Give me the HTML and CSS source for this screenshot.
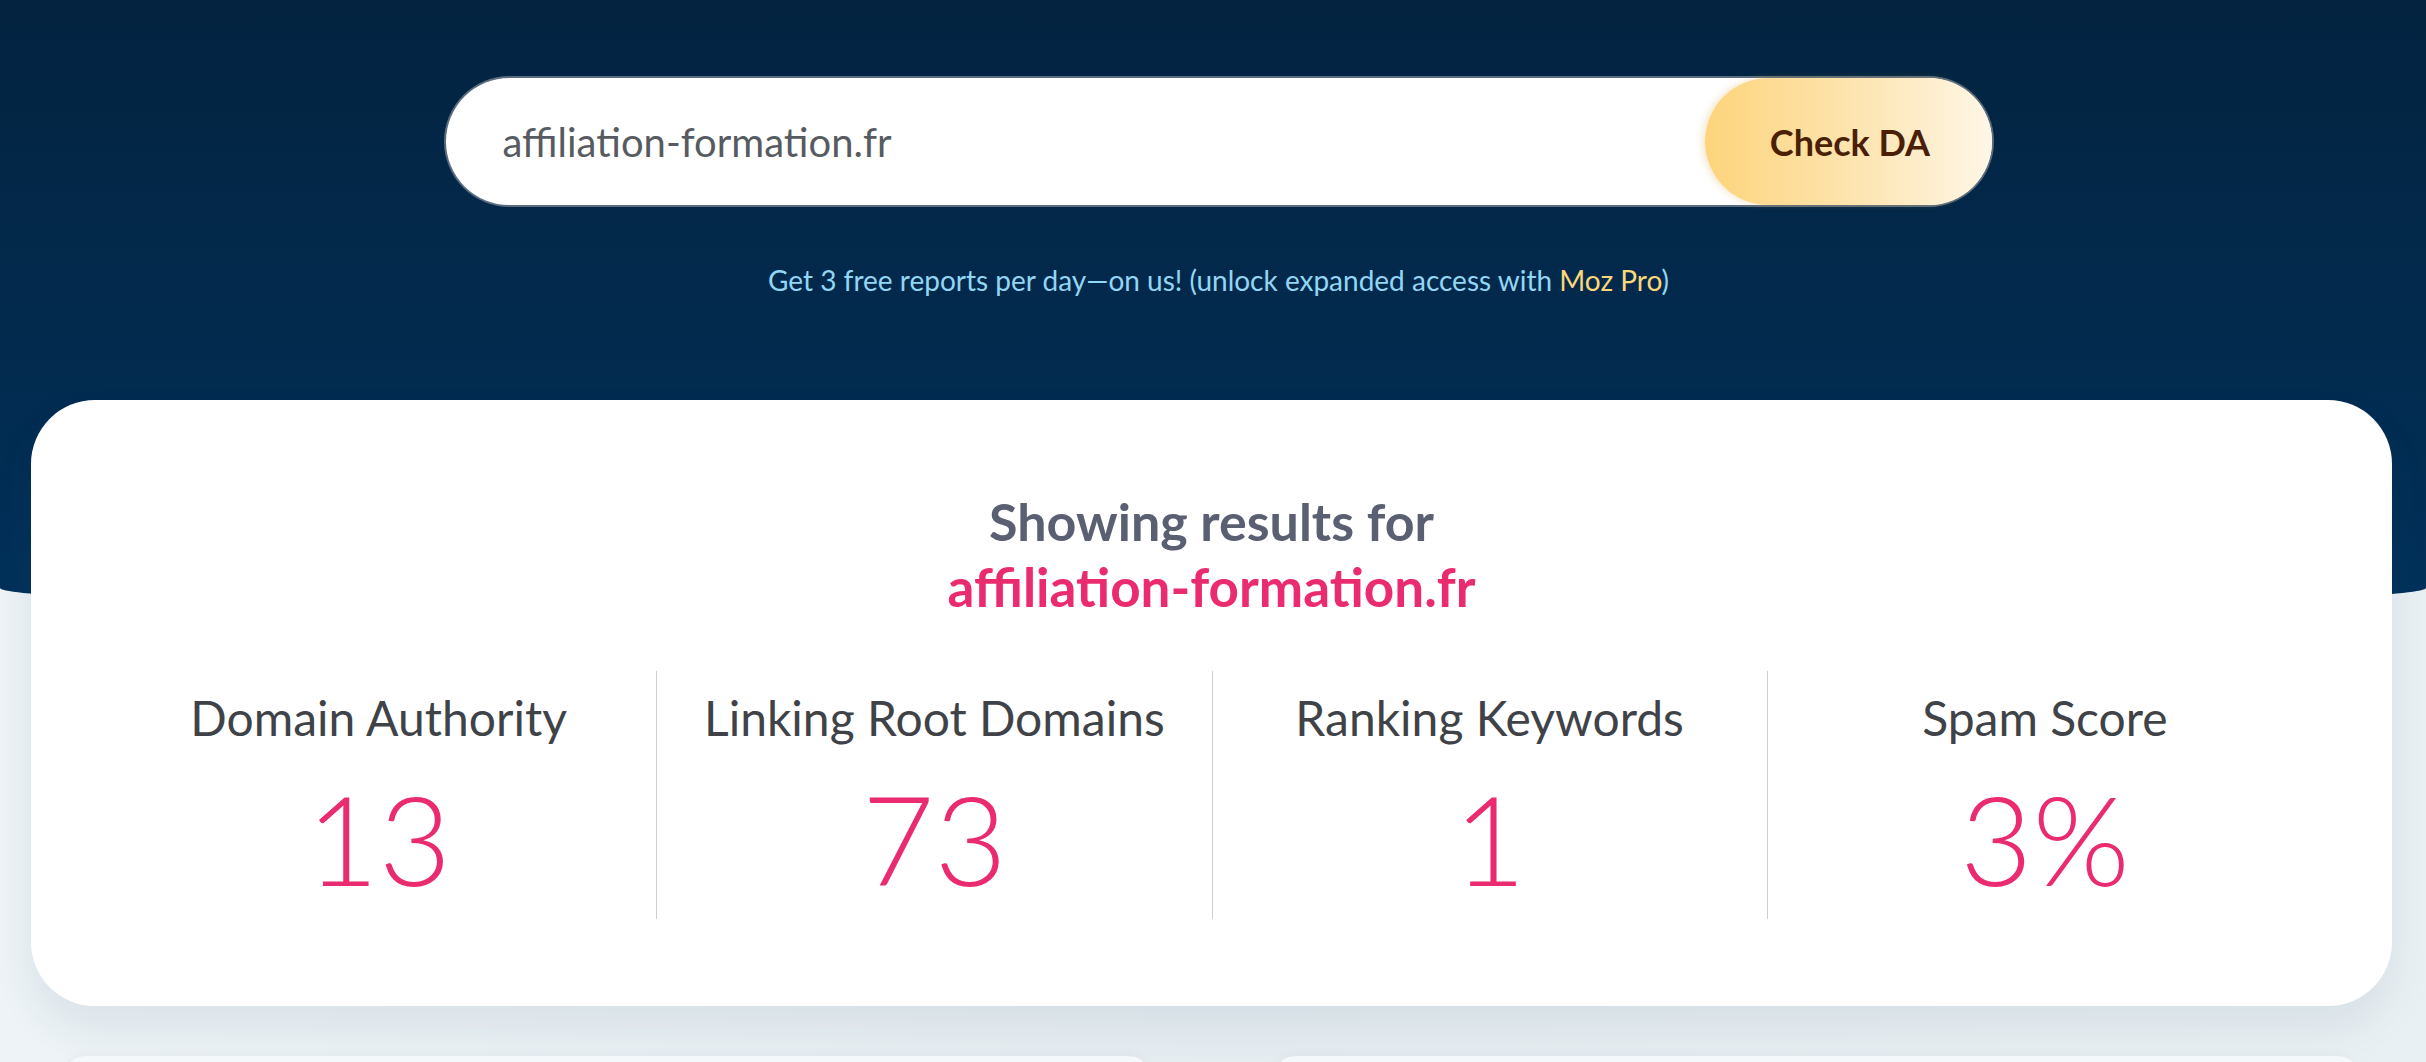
FILE: index.html
```html
<!DOCTYPE html>
<html lang="en">
<head>
<meta charset="utf-8">
<title>Domain Authority Checker</title>
<link rel="stylesheet" href="styles.css">
</head>
<body>
<header class="hero">
  <form class="search">
    <input class="search-input" type="text" value="affiliation-formation.fr">
    <button class="search-btn" type="button">Check DA</button>
  </form>
  <p class="note">Get 3 free reports per day—on us! (unlock expanded access with <a class="note-link">Moz Pro</a>)</p>
</header>
<main class="content">
  <section class="results">
    <h1 class="results-title">Showing results for<br><span class="domain">affiliation-formation.fr</span></h1>
    <div class="stats">
      <div class="stat"><div class="stat-label">Domain Authority</div><div class="stat-value">13</div></div>
      <div class="stat"><div class="stat-label">Linking Root Domains</div><div class="stat-value">73</div></div>
      <div class="stat"><div class="stat-label">Ranking Keywords</div><div class="stat-value">1</div></div>
      <div class="stat"><div class="stat-label">Spam Score</div><div class="stat-value">3%</div></div>
    </div>
  </section>
  <div class="cards">
    <div class="card"></div>
    <div class="card"></div>
  </div>
</main>
</body>
</html>
```

FILE: styles.css
```css
* { box-sizing: border-box; }

html, body {
  margin: 0;
  padding: 0;
}

body {
  font-family: Lato, "Open Sans", "Liberation Sans", sans-serif;
  background: linear-gradient(90deg, #edf3f6 0%, #e6edf1 50%, #e9f0f3 100%);
  overflow: hidden;
  height: 1062px;
}

.hero {
  height: 613px;
  padding: 78px 0 0 11px;
  background: linear-gradient(180deg, #032340 0%, #022b4f 60%, #01315b 100%);
  border-radius: 0 0 50% 50% / 0 0 25px 25px;
}

.search {
  display: flex;
  width: 1546px;
  height: 127px;
  margin: 0 auto;
  background: #ffffff;
  border-radius: 64px;
  box-shadow: 0 0 0 2px rgba(120, 132, 146, 0.75);
}

.search-input {
  flex: 1;
  min-width: 0;
  border: none;
  outline: none;
  background: transparent;
  padding: 0 0 0 57px;
  font-family: Lato, "Open Sans", sans-serif;
  font-size: 40px;
  color: #565b61;
}

.search-btn {
  width: 287px;
  height: 127px;
  border: none;
  border-radius: 64px;
  background: linear-gradient(90deg, #fdd47c 0%, #fde2a8 45%, #fef6e6 100%);
  box-shadow: -3px 0 6px rgba(214, 160, 60, 0.25);
  font-family: Lato, "Open Sans", sans-serif;
  font-weight: 700;
  font-size: 36px;
  color: #4a1f05;
  padding: 0 0 0 4px;
}

.note {
  margin: 60px 0 0;
  text-align: center;
  font-size: 28px;
  line-height: 30px;
  color: #93d6f3;
}

.note-link {
  color: #fcd67a;
}

.content {
  margin-top: -213px;
  padding: 0 34px 0 31px;
}

.results {
  background: #ffffff;
  border-radius: 64px;
  padding: 89px 70px 87px;
  box-shadow: 0 22px 40px rgba(40, 80, 110, 0.09);
}

.results-title {
  margin: 0;
  text-align: center;
  font-size: 52px;
  line-height: 65px;
  font-weight: 700;
  color: #5a6071;
}

.domain {
  font-size: 53px;
  color: #ea2b6f;
}

.stats {
  display: grid;
  grid-template-columns: repeat(4, 1fr);
  margin-top: 51px;
}

.stat {
  height: 248px;
  padding-top: 18px;
  text-align: center;
}

.stat + .stat {
  border-left: 1px solid #cdcfd2;
}

.stat-label {
  font-size: 48px;
  line-height: 58px;
  color: #3f4348;
}

.stat-value {
  margin-top: 16px;
  font-size: 125px;
  line-height: 150px;
  font-weight: 300;
  color: #ea2b6f;
}

.cards {
  display: grid;
  grid-template-columns: 1fr 1fr;
  gap: 120px;
  padding: 0 31px;
  margin-top: 50px;
}

.card {
  height: 300px;
  background: #f5f8fa;
  border-radius: 24px;
  box-shadow: 0 -2px 10px rgba(40, 80, 110, 0.04);
}
```
